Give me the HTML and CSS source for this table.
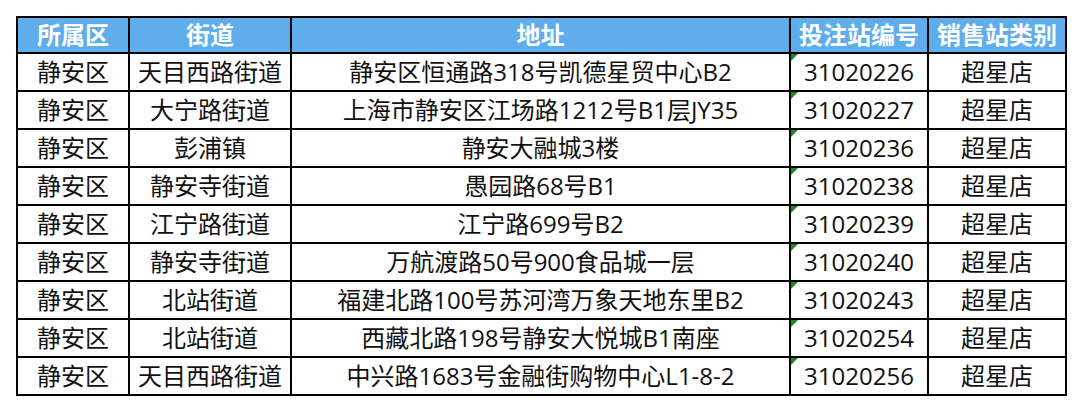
FILE: index.html
```html
<!DOCTYPE html>
<html lang="zh-CN">
<head>
<meta charset="utf-8">
<link rel="stylesheet" href="styles.css">
</head>
<body>
<table class="sheet">
  <colgroup>
    <col class="c1"><col class="c2"><col class="c3"><col class="c4"><col class="c5">
  </colgroup>
  <thead>
    <tr><th>所属区</th><th>街道</th><th>地址</th><th>投注站编号</th><th>销售站类别</th></tr>
  </thead>
  <tbody>
    <tr><td>静安区</td><td>天目西路街道</td><td>静安区恒通路318号凯德星贸中心B2</td><td class="num">31020226</td><td>超星店</td></tr>
    <tr><td>静安区</td><td>大宁路街道</td><td>上海市静安区江场路1212号B1层JY35</td><td class="num">31020227</td><td>超星店</td></tr>
    <tr><td>静安区</td><td>彭浦镇</td><td>静安大融城3楼</td><td class="num">31020236</td><td>超星店</td></tr>
    <tr><td>静安区</td><td>静安寺街道</td><td>愚园路68号B1</td><td class="num">31020238</td><td>超星店</td></tr>
    <tr><td>静安区</td><td>江宁路街道</td><td>江宁路699号B2</td><td class="num">31020239</td><td>超星店</td></tr>
    <tr><td>静安区</td><td>静安寺街道</td><td>万航渡路50号900食品城一层</td><td class="num">31020240</td><td>超星店</td></tr>
    <tr><td>静安区</td><td>北站街道</td><td>福建北路100号苏河湾万象天地东里B2</td><td class="num">31020243</td><td>超星店</td></tr>
    <tr><td>静安区</td><td>北站街道</td><td>西藏北路198号静安大悦城B1南座</td><td class="num">31020254</td><td>超星店</td></tr>
    <tr><td>静安区</td><td>天目西路街道</td><td>中兴路1683号金融街购物中心L1-8-2</td><td class="num">31020256</td><td>超星店</td></tr>
  </tbody>
</table>
</body>
</html>
```
FILE: styles.css
```css
html, body {
  margin: 0;
  background: #ffffff;
}
body {
  padding: 16px;
  font-family: "Open Sans", "Noto Sans CJK SC", sans-serif;
  color: #111;
}
.sheet {
  border-collapse: separate;
  border-spacing: 0;
  table-layout: fixed;
  width: 1051px;
  border-top: 2px solid #000;
  border-left: 2px solid #000;
}
.c1 { width: 112px; }
.c2 { width: 162px; }
.c3 { width: 499px; }
.c4 { width: 138px; }
.c5 { width: 138px; }
.sheet th, .sheet td {
  border-right: 2px solid #000;
  border-bottom: 2px solid #000;
  padding: 0;
  text-align: center;
  vertical-align: middle;
  white-space: nowrap;
  font-size: 24px;
  line-height: 1;
}
.sheet th {
  height: 34px;
  background: #5fadea;
  color: #ffffff;
  font-weight: 700;
}
.sheet td {
  height: 36px;
  font-weight: 400;
}
.sheet td.num {
  position: relative;
}
.sheet td.num::before {
  content: "";
  position: absolute;
  left: 0;
  top: 0;
  width: 0;
  height: 0;
  border-top: 7px solid #1f8a1f;
  border-right: 7px solid transparent;
}
```
